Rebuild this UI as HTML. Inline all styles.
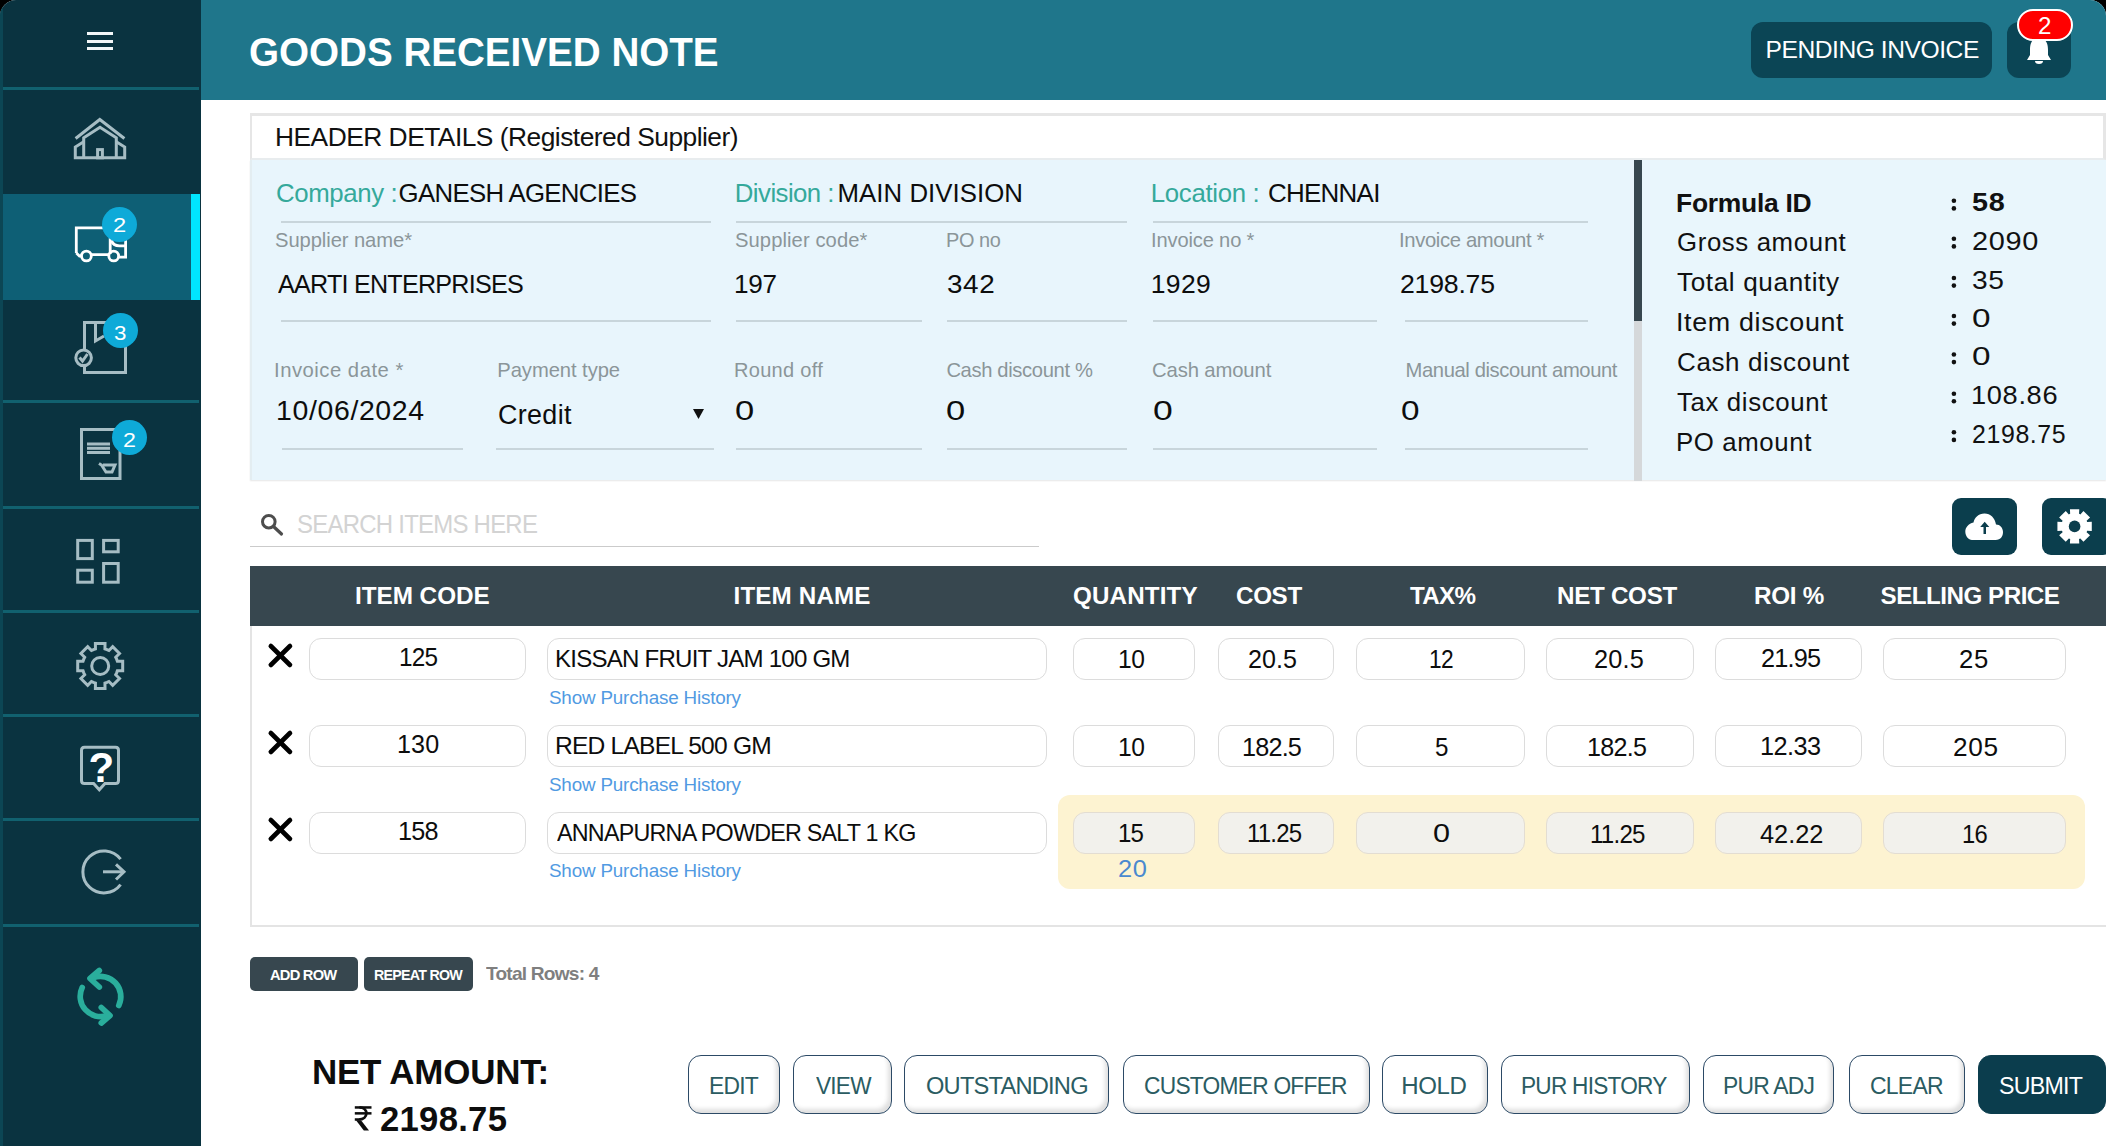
<!DOCTYPE html>
<html><head><meta charset="utf-8">
<style>
*{margin:0;padding:0;box-sizing:border-box}
html,body{width:2106px;height:1146px;overflow:hidden;background:#000}
body{font-family:"Liberation Sans",sans-serif;position:relative}
#app{position:absolute;left:0;top:0;width:2106px;height:1146px;background:#fff;border-radius:16px 16px 0 0;overflow:hidden}
.a{position:absolute}
.t{position:absolute;white-space:nowrap;line-height:1;}

.b{font-weight:bold}
svg{position:absolute;left:0;top:0;overflow:visible}
.sep{position:absolute;left:3px;width:196px;height:3px;background:#11616f}
.badge{position:absolute;width:35px;height:35px;border-radius:50%;background:#0eaad8}
.ic{fill:none;stroke:#a6bdc4;stroke-width:3}
.ul{position:absolute;height:2px;background:#c8d5db}
.inp{position:absolute;height:42px;border:1.5px solid #dcdcdc;border-radius:12px;background:#fff}
.inp3{background:#f2f1ec;border-color:#e3ddd2}
.btn{position:absolute;top:1055px;height:59px;border:1.7px solid #2c4a66;border-radius:13px;background:#fff;box-shadow:inset -3px -4px 4px rgba(0,0,0,0.13)}
</style></head><body>
<div id="app">
  <!-- sidebar -->
  <div class="a" style="left:0;top:0;width:201px;height:1146px;background:#0a3340;border-left:3px solid #0c4654"></div>
  <div class="a" style="left:3px;top:194px;width:197px;height:106px;background:#0e5f75"></div>
  <div class="a" style="left:191px;top:194px;width:9px;height:106px;background:#00e6ff"></div>
  <div class="sep" style="top:87px"></div>
  <div class="sep" style="top:400px"></div>
  <div class="sep" style="top:506px"></div>
  <div class="sep" style="top:610px"></div>
  <div class="sep" style="top:714px"></div>
  <div class="sep" style="top:818px"></div>
  <div class="sep" style="top:924px"></div>
  <div class="a" style="left:87px;top:32px;width:26px;height:3px;background:#f2f7f8"></div>
  <div class="a" style="left:87px;top:40px;width:26px;height:3px;background:#f2f7f8"></div>
  <div class="a" style="left:87px;top:47px;width:26px;height:3px;background:#f2f7f8"></div>
  <svg width="201" height="1146">
    <g class="ic">
      <polyline points="75.6,138.5 99.8,119.5 124.4,138.5"/>
      <polyline points="83.7,158 83.7,137.8 100,127.2 116.3,137.8 116.3,158"/>
      <polyline points="83.7,141.8 75.3,147 75.3,157.8 124.7,157.8 124.7,147 116.3,141.8"/>
      <rect x="97.6" y="149.6" width="4.8" height="8.2"/>
    </g>
    <g fill="none" stroke="#fff" stroke-width="2.8">
      <path d="M76.3,253 V227.8 H110.2 V254"/>
      <path d="M125.6,237 V257.2 H118.5"/>
      <path d="M111.5,240.5 Q113,245.8 119.5,245.8 H125.6"/>
      <path d="M76.3,253 L79.5,256 H81"/>
      <line x1="91.5" y1="254.6" x2="108.5" y2="254.6"/>
      <circle cx="86.4" cy="256" r="4.9"/>
      <circle cx="113.7" cy="256" r="4.9"/>
    </g>
    <g class="ic">
      <path d="M84.5,349 V322.5 H125.5 V372.5 H84.5 V366"/>
      <path d="M95.5,323 V341 L104,336"/>
      <circle cx="83.6" cy="357.8" r="7.8"/>
      <polyline points="79.5,357.5 82.5,361 87.5,354"/>
    </g>
    <g class="ic">
      <rect x="81.5" y="429.5" width="38.5" height="49"/>
      <line x1="87" y1="444" x2="110" y2="444"/>
      <line x1="87" y1="448.3" x2="110" y2="448.3"/>
      <line x1="87" y1="452.5" x2="110" y2="452.5"/>
      <path d="M99,463.5 L101.5,465 L106,472 H112 L115,465 H103"/>
    </g>
    <g class="ic">
      <rect x="77.7" y="540.4" width="14.6" height="18.2"/>
      <rect x="103.6" y="540.4" width="14.6" height="11.4"/>
      <rect x="77.7" y="570.2" width="14.6" height="12"/>
      <rect x="103.6" y="563.5" width="14.6" height="18.7"/>
    </g>
    <g class="ic">
      <path d="M116.65,659.19 L117.36,661.25 L122.69,661.19 L122.69,670.81 L117.36,670.75 L116.65,672.81 L115.69,674.77 L119.50,678.50 L112.70,685.30 L108.97,681.49 L107.01,682.45 L104.95,683.16 L105.01,688.49 L95.39,688.49 L95.45,683.16 L93.39,682.45 L91.43,681.49 L87.70,685.30 L80.90,678.50 L84.71,674.77 L83.75,672.81 L83.04,670.75 L77.71,670.81 L77.71,661.19 L83.04,661.25 L83.75,659.19 L84.71,657.23 L80.90,653.50 L87.70,646.70 L91.43,650.51 L93.39,649.55 L95.45,648.84 L95.39,643.51 L105.01,643.51 L104.95,648.84 L107.01,649.55 L108.97,650.51 L112.70,646.70 L119.50,653.50 L115.69,657.23 Z"/>
      <circle cx="100.2" cy="666" r="8.5"/>
    </g>
    <g class="ic" stroke-width="3.2">
      <path d="M84.5,747.3 H115.5 Q118.5,747.3 118.5,750.3 V780.5 Q118.5,783.5 115.5,783.5 H105 L99.3,789.8 L93.6,783.5 H84.5 Q81.5,783.5 81.5,780.5 V750.3 Q81.5,747.3 84.5,747.3 Z"/>
    </g>
    <text x="101.3" y="782" font-family="Liberation Sans" font-weight="bold" font-size="42" fill="#fff" text-anchor="middle">?</text>
    <g class="ic" stroke-width="2.7">
      <path d="M120.6,859.2 A21,21 0 1 0 120.6,884.6"/>
      <line x1="103" y1="871.8" x2="124" y2="871.8"/>
      <polyline points="116,864.3 124,871.8 116,879.5"/>
    </g>
    <g fill="none" stroke="#2aae9c" stroke-width="5.7" stroke-linecap="round" stroke-linejoin="round">
      <path d="M93.5,977.6 A20.3,20.3 0 0 1 118.8,1005.5"/>
      <polyline points="99.3,970.5 90,978.5 99.3,987"/>
      <path d="M82.2,987.5 A20.3,20.3 0 0 0 107,1015.5"/>
      <polyline points="101.3,1007.5 110,1015.5 101.3,1023"/>
    </g>
  </svg>
  <div class="badge" style="left:102px;top:207px"></div>
  <div class="badge" style="left:103px;top:313px"></div>
  <div class="badge" style="left:111.5px;top:420px"></div>

  <!-- top bar -->
  <div class="a" style="left:201px;top:0;width:1905px;height:100px;background:#1f768b"></div>
  <div class="a" style="left:1751px;top:22px;width:241px;height:56px;border-radius:12px;background:#0b4555"></div>
  <div class="a" style="left:2007px;top:22px;width:64px;height:56px;border-radius:12px;background:#0b4555"></div>
  <svg width="2106" height="100">
    <path d="M2039,38 C2031,38 2030,45 2030,50 V55 L2027,60 H2051 L2048,55 V50 C2048,45 2047,38 2039,38 Z" fill="#fff"/>
    <path d="M2035,61 H2043 A4,3 0 0 1 2035,61 Z" fill="#fff"/>
  </svg>
  <div class="a" style="left:2017px;top:9px;width:56px;height:32px;border-radius:16px;background:#f00;border:2px solid #fff"></div>

  <!-- header details -->
  <div class="a" style="left:250px;top:113px;width:1856px;height:47px;background:#fff;border-top:3px solid #e6e6e6;border-left:2px solid #e6e6e6;border-right:3px solid #e6e6e6;border-bottom:2px solid #e8ecee"></div>
  <div class="a" style="left:250px;top:160px;width:1856px;height:320px;background:#e8f5fc;border-left:2px solid #e3edf1;box-shadow:0 1px 1.5px rgba(0,0,0,0.10)"></div>
  <div class="a" style="left:1642px;top:160px;width:464px;height:320px;background:#e9f6fc"></div>
  <div class="a" style="left:1634px;top:160px;width:8px;height:321px;background:#d5d8da"></div>
  <div class="a" style="left:1634px;top:160px;width:8px;height:161px;background:#37474f"></div>
  <div class="ul" style="left:281px;top:221px;width:430px"></div>
  <div class="ul" style="left:736px;top:221px;width:391px"></div>
  <div class="ul" style="left:1153px;top:221px;width:435px"></div>
  <div class="ul" style="left:281px;top:320px;width:430px"></div>
  <div class="ul" style="left:736px;top:320px;width:186px"></div>
  <div class="ul" style="left:947px;top:320px;width:180px"></div>
  <div class="ul" style="left:1153px;top:320px;width:224px"></div>
  <div class="ul" style="left:1405px;top:320px;width:183px"></div>
  <div class="ul" style="left:282px;top:448px;width:181px"></div>
  <div class="ul" style="left:496px;top:448px;width:218px"></div>
  <div class="ul" style="left:736px;top:448px;width:186px"></div>
  <div class="ul" style="left:947px;top:448px;width:180px"></div>
  <div class="ul" style="left:1153px;top:448px;width:224px"></div>
  <div class="ul" style="left:1405px;top:448px;width:183px"></div>
  <svg width="2106" height="1146"><path d="M693,409 H704 L698.5,419 Z" fill="#111"/></svg>

  <!-- summary colons -->
  <svg width="2106" height="1146" fill="#111">
    <circle cx="1953.9" cy="200.8" r="2.3"/><circle cx="1953.9" cy="208.4" r="2.3"/>
<circle cx="1953.9" cy="238.8" r="2.3"/><circle cx="1953.9" cy="246.4" r="2.3"/>
<circle cx="1953.9" cy="278.0" r="2.3"/><circle cx="1953.9" cy="285.6" r="2.3"/>
<circle cx="1953.9" cy="316.0" r="2.3"/><circle cx="1953.9" cy="323.6" r="2.3"/>
<circle cx="1953.9" cy="354.5" r="2.3"/><circle cx="1953.9" cy="362.1" r="2.3"/>
<circle cx="1953.9" cy="393.7" r="2.3"/><circle cx="1953.9" cy="401.3" r="2.3"/>
<circle cx="1953.9" cy="432.3" r="2.3"/><circle cx="1953.9" cy="439.9" r="2.3"/>
  </svg>

  <!-- search -->
  <svg width="2106" height="1146">
    <circle cx="268.8" cy="521.7" r="6.3" fill="none" stroke="#4d4d4d" stroke-width="3"/>
    <line x1="273.5" y1="526.5" x2="281.5" y2="534" stroke="#4d4d4d" stroke-width="3.2" stroke-linecap="round"/>
  </svg>
  <div class="a" style="left:250px;top:545.5px;width:789px;height:1.6px;background:#cbcbcb"></div>

  <div class="a" style="left:1952px;top:498px;width:65px;height:57px;border-radius:9px;background:#0b3e4d"></div>
  <div class="a" style="left:2042px;top:498px;width:70px;height:57px;border-radius:9px;background:#0b3e4d"></div>
  <svg width="2106" height="1146">
    <path d="M1972,540 H1995.5 C2001,540 2003,536 2003,532 C2003,528 2000,524.5 1996,524.5 C1995,518 1990.5,513.5 1984.5,513.5 C1978.5,513.5 1974.5,517.5 1973.5,522.5 C1968.5,523.5 1965.3,527.5 1965.3,531.5 C1965.3,536 1968.5,540 1972,540 Z" fill="#fff"/>
    <path d="M1984.7,521.8 L1980.2,527 H1983.5 V534 H1986 V527 H1989.3 Z" fill="#0b3e4d"/>
    <path fill="#fff" d="M2086.89,521.31 L2087.14,521.96 L2091.78,521.73 L2091.78,531.07 L2087.14,530.84 L2086.89,531.49 L2086.60,532.13 L2090.05,535.25 L2083.45,541.85 L2080.33,538.40 L2079.69,538.69 L2079.04,538.94 L2079.27,543.58 L2069.93,543.58 L2070.16,538.94 L2069.51,538.69 L2068.87,538.40 L2065.75,541.85 L2059.15,535.25 L2062.60,532.13 L2062.31,531.49 L2062.06,530.84 L2057.42,531.07 L2057.42,521.73 L2062.06,521.96 L2062.31,521.31 L2062.60,520.67 L2059.15,517.55 L2065.75,510.95 L2068.87,514.40 L2069.51,514.11 L2070.16,513.86 L2069.93,509.22 L2079.27,509.22 L2079.04,513.86 L2079.69,514.11 L2080.33,514.40 L2083.45,510.95 L2090.05,517.55 L2086.60,520.67 Z"/>
    <circle cx="2074.6" cy="526.4" r="5.8" fill="#0b3e4d"/>
  </svg>

  <!-- table -->
  <div class="a" style="left:250px;top:566px;width:1856px;height:60px;background:#37474f"></div>
  <div class="a" style="left:250px;top:626px;width:2px;height:300px;background:#e4e4e4"></div>
  <div class="a" style="left:250px;top:925px;width:1856px;height:2px;background:#e4e4e4"></div>
  <div class="a" style="left:1058px;top:795px;width:1027px;height:94px;border-radius:12px;background:#fdf3d1"></div>
  <svg width="400" height="1146"><g stroke="#000" stroke-width="4.6" stroke-linecap="round"><line x1="270.8" y1="646.0" x2="290" y2="665.0"/><line x1="290" y1="646.0" x2="270.8" y2="665.0"/></g></svg>
  <div class="inp" style="left:309px;top:637.5px;width:217px"></div>
  <div class="inp" style="left:547px;top:637.5px;width:500px"></div>
  <div class="inp" style="left:1073px;top:637.5px;width:122px"></div>
  <div class="inp" style="left:1217.5px;top:637.5px;width:116px"></div>
  <div class="inp" style="left:1356px;top:637.5px;width:169px"></div>
  <div class="inp" style="left:1546px;top:637.5px;width:147.5px"></div>
  <div class="inp" style="left:1714.5px;top:637.5px;width:147px"></div>
  <div class="inp" style="left:1883px;top:637.5px;width:183px"></div>
  <svg width="400" height="1146"><g stroke="#000" stroke-width="4.6" stroke-linecap="round"><line x1="270.8" y1="733.0" x2="290" y2="752.0"/><line x1="290" y1="733.0" x2="270.8" y2="752.0"/></g></svg>
  <div class="inp" style="left:309px;top:724.5px;width:217px"></div>
  <div class="inp" style="left:547px;top:724.5px;width:500px"></div>
  <div class="inp" style="left:1073px;top:724.5px;width:122px"></div>
  <div class="inp" style="left:1217.5px;top:724.5px;width:116px"></div>
  <div class="inp" style="left:1356px;top:724.5px;width:169px"></div>
  <div class="inp" style="left:1546px;top:724.5px;width:147.5px"></div>
  <div class="inp" style="left:1714.5px;top:724.5px;width:147px"></div>
  <div class="inp" style="left:1883px;top:724.5px;width:183px"></div>
  <svg width="400" height="1146"><g stroke="#000" stroke-width="4.6" stroke-linecap="round"><line x1="270.8" y1="820.0" x2="290" y2="839.0"/><line x1="290" y1="820.0" x2="270.8" y2="839.0"/></g></svg>
  <div class="inp" style="left:309px;top:811.5px;width:217px"></div>
  <div class="inp" style="left:547px;top:811.5px;width:500px"></div>
  <div class="inp inp3" style="left:1073px;top:811.5px;width:122px"></div>
  <div class="inp inp3" style="left:1217.5px;top:811.5px;width:116px"></div>
  <div class="inp inp3" style="left:1356px;top:811.5px;width:169px"></div>
  <div class="inp inp3" style="left:1546px;top:811.5px;width:147.5px"></div>
  <div class="inp inp3" style="left:1714.5px;top:811.5px;width:147px"></div>
  <div class="inp inp3" style="left:1883px;top:811.5px;width:183px"></div>

  <!-- bottom -->
  <div class="a" style="left:250px;top:957px;width:108px;height:34px;border-radius:5px;background:#37474f"></div>
  <div class="a" style="left:364px;top:957px;width:109px;height:34px;border-radius:5px;background:#37474f"></div>
  <div class="btn" style="left:688px;width:92px"></div>
  <div class="btn" style="left:793px;width:99px"></div>
  <div class="btn" style="left:904px;width:205px"></div>
  <div class="btn" style="left:1123px;width:247px"></div>
  <div class="btn" style="left:1382px;width:106px"></div>
  <div class="btn" style="left:1501px;width:189px"></div>
  <div class="btn" style="left:1703px;width:131px"></div>
  <div class="btn" style="left:1849px;width:116px"></div>
  <div class="btn" style="left:1978px;width:128px;background:#0b3d4d;border-color:#0b3d4d;box-shadow:none"></div>

  <svg width="2106" height="1146">
    <g fill="#0d0d0d">
      <rect x="354.8" y="1106.2" width="16.7" height="2.5"/>
      <rect x="354.8" y="1112.1" width="16.7" height="2.5"/>
      <path d="M356,1120.3 H361 L369,1130.5 H363.8 Z"/>
    </g>
    <path d="M359.5,1107.4 C364.5,1107.6 366.4,1110.6 366.4,1113.3 C366.4,1116.6 363.6,1119.5 358.5,1119.5 H354.8" fill="none" stroke="#0d0d0d" stroke-width="2.7"/>
  </svg>
  <div class="t b" style="left:248.7px;top:31.7px;font-size:40.58px;color:#fff;transform:scaleX(0.951);transform-origin:0 0">GOODS RECEIVED NOTE</div>
  <div class="t" style="left:1765.5px;top:38.4px;font-size:24.64px;color:#fff;letter-spacing:-0.46px">PENDING INVOICE</div>
  <div class="t" style="left:2038.3px;top:13.5px;font-size:23.77px;color:#fff;transform:scaleX(1.018);transform-origin:0 0">2</div>
  <div class="t" style="left:275.0px;top:124.2px;font-size:26.38px;color:#111;letter-spacing:-0.52px">HEADER DETAILS (Registered Supplier)</div>
  <div class="t" style="left:276.0px;top:180.5px;font-size:25.80px;color:#35a99b;letter-spacing:-0.38px">Company :</div>
  <div class="t" style="left:398.6px;top:180.5px;font-size:25.80px;color:#0d0d0d;letter-spacing:-0.69px">GANESH AGENCIES</div>
  <div class="t" style="left:734.8px;top:180.5px;font-size:25.80px;color:#35a99b;letter-spacing:-0.56px">Division :</div>
  <div class="t" style="left:837.6px;top:180.5px;font-size:25.80px;color:#0d0d0d;letter-spacing:0.03px">MAIN DIVISION</div>
  <div class="t" style="left:1150.8px;top:180.5px;font-size:25.80px;color:#35a99b;letter-spacing:-0.32px">Location :</div>
  <div class="t" style="left:1267.6px;top:180.5px;font-size:25.80px;color:#0d0d0d;letter-spacing:-0.73px;transform:scaleX(1.006);transform-origin:0 0">CHENNAI</div>
  <div class="t" style="left:275.0px;top:230.3px;font-size:20.20px;color:#8b9599;letter-spacing:-0.08px">Supplier name*</div>
  <div class="t" style="left:735.0px;top:230.3px;font-size:20.20px;color:#8b9599;letter-spacing:0.08px">Supplier code*</div>
  <div class="t" style="left:946.0px;top:230.3px;font-size:20.20px;color:#8b9599;letter-spacing:-0.42px;transform:scaleX(0.987);transform-origin:0 0">PO no</div>
  <div class="t" style="left:1150.8px;top:230.3px;font-size:20.20px;color:#8b9599;letter-spacing:-0.14px;transform:scaleX(0.995);transform-origin:0 0">Invoice no *</div>
  <div class="t" style="left:1399.4px;top:230.3px;font-size:20.20px;color:#8b9599;letter-spacing:-0.37px;transform:scaleX(1.004);transform-origin:0 0">Invoice amount *</div>
  <div class="t" style="left:277.8px;top:271.1px;font-size:26.50px;color:#0d0d0d;letter-spacing:-0.80px;transform:scaleX(0.948);transform-origin:0 0">AARTI ENTERPRISES</div>
  <div class="t" style="left:733.6px;top:271.1px;font-size:26.50px;color:#0d0d0d;letter-spacing:-0.30px;transform:scaleX(0.985);transform-origin:0 0">197</div>
  <div class="t" style="left:947.0px;top:271.1px;font-size:26.50px;color:#0d0d0d;letter-spacing:0.60px;transform:scaleX(1.051);transform-origin:0 0">342</div>
  <div class="t" style="left:1150.8px;top:271.1px;font-size:26.50px;color:#0d0d0d;letter-spacing:0.33px">1929</div>
  <div class="t" style="left:1400.4px;top:271.1px;font-size:26.50px;color:#0d0d0d;letter-spacing:-0.23px;transform:scaleX(1.007);transform-origin:0 0">2198.75</div>
  <div class="t" style="left:274.0px;top:359.6px;font-size:20.20px;color:#8b9599;letter-spacing:0.50px;transform:scaleX(1.004);transform-origin:0 0">Invoice date *</div>
  <div class="t" style="left:497.3px;top:359.6px;font-size:20.20px;color:#8b9599;letter-spacing:-0.06px">Payment type</div>
  <div class="t" style="left:733.7px;top:359.6px;font-size:20.20px;color:#8b9599;letter-spacing:0.29px;transform:scaleX(0.992);transform-origin:0 0">Round off</div>
  <div class="t" style="left:946.4px;top:359.6px;font-size:20.20px;color:#8b9599;letter-spacing:-0.36px">Cash discount %</div>
  <div class="t" style="left:1151.8px;top:359.6px;font-size:20.20px;color:#8b9599;letter-spacing:-0.14px;transform:scaleX(1.005);transform-origin:0 0">Cash amount</div>
  <div class="t" style="left:1405.5px;top:359.6px;font-size:20.20px;color:#8b9599;letter-spacing:-0.38px">Manual discount amount</div>
  <div class="t" style="left:275.8px;top:397.6px;font-size:27.00px;color:#0d0d0d;letter-spacing:0.60px;transform:scaleX(1.054);transform-origin:0 0">10/06/2024</div>
  <div class="t" style="left:498.3px;top:401.6px;font-size:27.00px;color:#0d0d0d;letter-spacing:0.34px;transform:scaleX(0.996);transform-origin:0 0">Credit</div>
  <div class="t" style="left:734.7px;top:397.6px;font-size:27.00px;color:#0d0d0d;transform:scaleX(1.277);transform-origin:0 0">0</div>
  <div class="t" style="left:946.4px;top:397.6px;font-size:27.00px;color:#0d0d0d;transform:scaleX(1.277);transform-origin:0 0">0</div>
  <div class="t" style="left:1153.3px;top:397.6px;font-size:27.00px;color:#0d0d0d;transform:scaleX(1.315);transform-origin:0 0">0</div>
  <div class="t" style="left:1401.0px;top:397.6px;font-size:27.00px;color:#0d0d0d;transform:scaleX(1.231);transform-origin:0 0">0</div>
  <div class="t b" style="left:1675.8px;top:189.7px;font-size:26.52px;color:#111;letter-spacing:-0.27px;transform:scaleX(0.997);transform-origin:0 0">Formula ID</div>
  <div class="t" style="left:1676.8px;top:230.2px;font-size:25.30px;color:#111;letter-spacing:0.60px;transform:scaleX(1.020);transform-origin:0 0">Gross amount</div>
  <div class="t" style="left:1676.8px;top:269.9px;font-size:25.30px;color:#111;letter-spacing:0.60px;transform:scaleX(1.033);transform-origin:0 0">Total quantity</div>
  <div class="t" style="left:1675.8px;top:309.9px;font-size:25.30px;color:#111;letter-spacing:0.60px;transform:scaleX(1.063);transform-origin:0 0">Item discount</div>
  <div class="t" style="left:1676.8px;top:349.9px;font-size:25.30px;color:#111;letter-spacing:0.60px;transform:scaleX(1.028);transform-origin:0 0">Cash discount</div>
  <div class="t" style="left:1676.8px;top:389.9px;font-size:25.30px;color:#111;letter-spacing:0.60px;transform:scaleX(1.021);transform-origin:0 0">Tax discount</div>
  <div class="t" style="left:1675.8px;top:429.9px;font-size:25.30px;color:#111;letter-spacing:0.60px;transform:scaleX(1.020);transform-origin:0 0">PO amount</div>
  <div class="t b" style="left:1972.4px;top:190.4px;font-size:25.65px;color:#111;letter-spacing:0.60px;transform:scaleX(1.122);transform-origin:0 0">58</div>
  <div class="t" style="left:1972.4px;top:229.1px;font-size:25.00px;color:#111;letter-spacing:0.60px;transform:scaleX(1.157);transform-origin:0 0">2090</div>
  <div class="t" style="left:1972.4px;top:267.8px;font-size:25.00px;color:#111;letter-spacing:0.60px;transform:scaleX(1.127);transform-origin:0 0">35</div>
  <div class="t" style="left:1972.4px;top:305.9px;font-size:25.00px;color:#111;transform:scaleX(1.333);transform-origin:0 0">0</div>
  <div class="t" style="left:1972.4px;top:344.4px;font-size:25.00px;color:#111;transform:scaleX(1.333);transform-origin:0 0">0</div>
  <div class="t" style="left:1971.4px;top:383.4px;font-size:25.00px;color:#111;letter-spacing:0.60px;transform:scaleX(1.089);transform-origin:0 0">108.86</div>
  <div class="t" style="left:1972.4px;top:421.9px;font-size:25.00px;color:#111;letter-spacing:0.60px;transform:scaleX(0.997);transform-origin:0 0">2198.75</div>
  <div class="t" style="left:296.8px;top:512.0px;font-size:25.36px;color:#d3d3d3;letter-spacing:-0.80px;transform:scaleX(0.945);transform-origin:0 0">SEARCH ITEMS HERE</div>
  <div class="t b" style="left:355.3px;top:584.3px;font-size:24.20px;color:#fff;letter-spacing:-0.04px;transform:scaleX(1.005);transform-origin:0 0">ITEM CODE</div>
  <div class="t b" style="left:733.5px;top:584.3px;font-size:24.20px;color:#fff;letter-spacing:0.16px">ITEM NAME</div>
  <div class="t b" style="left:1073.0px;top:584.3px;font-size:24.20px;color:#fff;letter-spacing:0.14px">QUANTITY</div>
  <div class="t b" style="left:1236.0px;top:584.3px;font-size:24.20px;color:#fff;letter-spacing:-0.33px">COST</div>
  <div class="t b" style="left:1410.0px;top:584.3px;font-size:24.20px;color:#fff;letter-spacing:-0.67px">TAX%</div>
  <div class="t b" style="left:1557.0px;top:584.3px;font-size:24.20px;color:#fff;letter-spacing:-0.29px">NET COST</div>
  <div class="t b" style="left:1754.0px;top:584.3px;font-size:24.20px;color:#fff;letter-spacing:-0.25px">ROI %</div>
  <div class="t b" style="left:1880.5px;top:584.3px;font-size:24.20px;color:#fff;letter-spacing:-0.50px">SELLING PRICE</div>
  <div class="t" style="left:399.0px;top:645.2px;font-size:25.00px;color:#0d0d0d;letter-spacing:-0.80px;transform:scaleX(0.973);transform-origin:0 0">125</div>
  <div class="t" style="left:554.8px;top:646.8px;font-size:24.60px;color:#0d0d0d;letter-spacing:-0.80px;transform:scaleX(0.979);transform-origin:0 0">KISSAN FRUIT JAM 100 GM</div>
  <div class="t" style="left:548.9px;top:688.9px;font-size:18.90px;color:#519ae2;letter-spacing:-0.18px;transform:scaleX(0.996);transform-origin:0 0">Show Purchase History</div>
  <div class="t" style="left:1117.5px;top:646.9px;font-size:25.00px;color:#0d0d0d;letter-spacing:-0.40px;transform:scaleX(0.984);transform-origin:0 0">10</div>
  <div class="t" style="left:1248.2px;top:646.9px;font-size:25.00px;color:#0d0d0d;letter-spacing:0.07px;transform:scaleX(1.004);transform-origin:0 0">20.5</div>
  <div class="t" style="left:1428.5px;top:646.9px;font-size:25.00px;color:#0d0d0d;letter-spacing:-0.80px;transform:scaleX(0.908);transform-origin:0 0">12</div>
  <div class="t" style="left:1594.0px;top:646.9px;font-size:25.00px;color:#0d0d0d;letter-spacing:0.20px;transform:scaleX(1.013);transform-origin:0 0">20.5</div>
  <div class="t" style="left:1760.8px;top:646.1px;font-size:25.00px;color:#0d0d0d;letter-spacing:-0.80px;transform:scaleX(1.012);transform-origin:0 0">21.95</div>
  <div class="t" style="left:1959.0px;top:646.9px;font-size:25.00px;color:#0d0d0d;letter-spacing:0.60px;transform:scaleX(1.027);transform-origin:0 0">25</div>
  <div class="t" style="left:396.7px;top:731.9px;font-size:25.00px;color:#0d0d0d;letter-spacing:0.10px;transform:scaleX(1.005);transform-origin:0 0">130</div>
  <div class="t" style="left:555.0px;top:734.2px;font-size:24.60px;color:#0d0d0d;letter-spacing:-0.80px">RED LABEL 500 GM</div>
  <div class="t" style="left:548.9px;top:775.9px;font-size:18.90px;color:#519ae2;letter-spacing:-0.18px;transform:scaleX(0.996);transform-origin:0 0">Show Purchase History</div>
  <div class="t" style="left:1117.5px;top:734.6px;font-size:25.00px;color:#0d0d0d;letter-spacing:-0.40px;transform:scaleX(0.984);transform-origin:0 0">10</div>
  <div class="t" style="left:1242.0px;top:734.6px;font-size:25.00px;color:#0d0d0d;letter-spacing:-0.80px;transform:scaleX(1.009);transform-origin:0 0">182.5</div>
  <div class="t" style="left:1434.6px;top:734.6px;font-size:25.00px;color:#0d0d0d;transform:scaleX(0.967);transform-origin:0 0">5</div>
  <div class="t" style="left:1587.2px;top:734.6px;font-size:25.00px;color:#0d0d0d;letter-spacing:-0.70px;transform:scaleX(1.004);transform-origin:0 0">182.5</div>
  <div class="t" style="left:1759.8px;top:734.1px;font-size:25.00px;color:#0d0d0d;letter-spacing:-0.57px;transform:scaleX(1.012);transform-origin:0 0">12.33</div>
  <div class="t" style="left:1953.0px;top:734.6px;font-size:25.00px;color:#0d0d0d;letter-spacing:0.60px;transform:scaleX(1.049);transform-origin:0 0">205</div>
  <div class="t" style="left:397.7px;top:819.4px;font-size:25.00px;color:#0d0d0d;letter-spacing:-0.80px;transform:scaleX(1.008);transform-origin:0 0">158</div>
  <div class="t" style="left:557.0px;top:821.0px;font-size:24.60px;color:#0d0d0d;letter-spacing:-0.80px;transform:scaleX(0.947);transform-origin:0 0">ANNAPURNA POWDER SALT 1 KG</div>
  <div class="t" style="left:548.9px;top:862.4px;font-size:18.90px;color:#519ae2;letter-spacing:-0.18px;transform:scaleX(0.996);transform-origin:0 0">Show Purchase History</div>
  <div class="t" style="left:1117.5px;top:821.3px;font-size:25.00px;color:#0d0d0d;letter-spacing:-0.80px;transform:scaleX(0.962);transform-origin:0 0">15</div>
  <div class="t" style="left:1247.2px;top:821.3px;font-size:25.00px;color:#0d0d0d;letter-spacing:-0.80px;transform:scaleX(0.959);transform-origin:0 0">11.25</div>
  <div class="t" style="left:1432.8px;top:821.3px;font-size:25.00px;color:#0d0d0d;transform:scaleX(1.225);transform-origin:0 0">0</div>
  <div class="t" style="left:1589.6px;top:822.4px;font-size:25.00px;color:#0d0d0d;letter-spacing:-0.80px;transform:scaleX(0.965);transform-origin:0 0">11.25</div>
  <div class="t" style="left:1760.0px;top:822.4px;font-size:25.00px;color:#0d0d0d;letter-spacing:-0.03px;transform:scaleX(1.015);transform-origin:0 0">42.22</div>
  <div class="t" style="left:1961.6px;top:822.4px;font-size:25.00px;color:#0d0d0d;letter-spacing:-0.80px;transform:scaleX(0.950);transform-origin:0 0">16</div>
  <div class="t" style="left:1118.0px;top:857.9px;font-size:23.48px;color:#4a89cf;letter-spacing:0.60px;transform:scaleX(1.080);transform-origin:0 0">20</div>
  <div class="t b" style="left:270.0px;top:967.4px;font-size:15.07px;color:#fff;letter-spacing:-0.80px;transform:scaleX(0.976);transform-origin:0 0">ADD ROW</div>
  <div class="t b" style="left:374.2px;top:967.4px;font-size:15.07px;color:#fff;letter-spacing:-0.80px;transform:scaleX(0.946);transform-origin:0 0">REPEAT ROW</div>
  <div class="t b" style="left:486.3px;top:964.4px;font-size:19.28px;color:#7f7f7f;letter-spacing:-0.80px;transform:scaleX(0.993);transform-origin:0 0">Total Rows: 4</div>
  <div class="t b" style="left:312.0px;top:1054.6px;font-size:34.93px;color:#0d0d0d;letter-spacing:-0.22px">NET AMOUNT:</div>
  <div class="t b" style="left:380.3px;top:1101.6px;font-size:34.49px;color:#0d0d0d;letter-spacing:0.27px;transform:scaleX(1.005);transform-origin:0 0">2198.75</div>
  <div class="t" style="left:708.6px;top:1073.7px;font-size:24.06px;color:#2b5c62;letter-spacing:-0.80px;transform:scaleX(0.950);transform-origin:0 0">EDIT</div>
  <div class="t" style="left:815.6px;top:1073.7px;font-size:24.06px;color:#2b5c62;letter-spacing:-0.80px;transform:scaleX(0.939);transform-origin:0 0">VIEW</div>
  <div class="t" style="left:925.6px;top:1073.7px;font-size:24.06px;color:#2b5c62;letter-spacing:-0.80px;transform:scaleX(0.984);transform-origin:0 0">OUTSTANDING</div>
  <div class="t" style="left:1143.6px;top:1073.7px;font-size:24.06px;color:#2b5c62;letter-spacing:-0.80px;transform:scaleX(0.947);transform-origin:0 0">CUSTOMER OFFER</div>
  <div class="t" style="left:1401.2px;top:1073.7px;font-size:24.06px;color:#2b5c62;letter-spacing:-0.37px">HOLD</div>
  <div class="t" style="left:1521.0px;top:1073.7px;font-size:24.06px;color:#2b5c62;letter-spacing:-0.80px;transform:scaleX(0.941);transform-origin:0 0">PUR HISTORY</div>
  <div class="t" style="left:1722.8px;top:1073.7px;font-size:24.06px;color:#2b5c62;letter-spacing:-0.80px;transform:scaleX(0.951);transform-origin:0 0">PUR ADJ</div>
  <div class="t" style="left:1869.5px;top:1073.7px;font-size:24.06px;color:#2b5c62;letter-spacing:-0.80px;transform:scaleX(0.956);transform-origin:0 0">CLEAR</div>
  <div class="t" style="left:1999.0px;top:1073.7px;font-size:24.06px;color:#fff;letter-spacing:-0.80px;transform:scaleX(0.965);transform-origin:0 0">SUBMIT</div>
  <div class="t" style="left:112.8px;top:215.1px;font-size:20.50px;color:#fff;transform:scaleX(1.156);transform-origin:0 0">2</div>
  <div class="t" style="left:114.0px;top:322.5px;font-size:20.50px;color:#fff;transform:scaleX(1.090);transform-origin:0 0">3</div>
  <div class="t" style="left:123.0px;top:429.6px;font-size:20.50px;color:#fff;transform:scaleX(1.133);transform-origin:0 0">2</div>
</div>
</body></html>
